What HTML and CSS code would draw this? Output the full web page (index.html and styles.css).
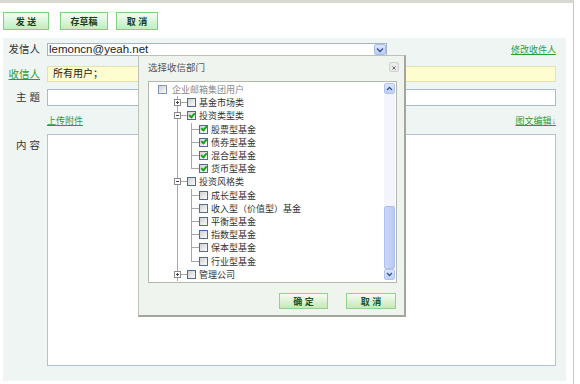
FILE: index.html
```html
<!DOCTYPE html>
<html lang="zh-CN">
<head>
    <meta charset="UTF-8">
    <meta name="viewport" content="width=device-width, initial-scale=1.0">
    <title>写信</title>
    <link rel="stylesheet" href="styles.css">
</head>
<body>
<div class="frame">
    <div class="toolbar">
        <button class="btn btn-send">发 送</button>
        <button class="btn btn-draft">存草稿</button>
        <button class="btn btn-cancel">取 消</button>
    </div>

    <div class="compose">
        <div class="row row-from">
            <span class="label">发信人</span>
            <div class="field">
                <div class="select">
                    <span class="select-text">lemoncn@yeah.net</span>
                    <span class="select-arrow">
                        <svg width="8" height="6" viewBox="0 0 8 6"><path d="M1 1.5 L4 4.5 L7 1.5" fill="none" stroke="#34558f" stroke-width="1.4"/></svg>
                    </span>
                </div>
                <a class="link link-right" href="#">修改收件人</a>
            </div>
        </div>
        <div class="row row-to">
            <a class="label label-link" href="#">收信人</a>
            <div class="field">
                <div class="input input-yellow">所有用户；</div>
            </div>
        </div>
        <div class="row row-subject">
            <span class="label">主 题</span>
            <div class="field">
                <div class="input"></div>
            </div>
        </div>
        <div class="row row-links">
            <span class="label"></span>
            <div class="field">
                <a class="link" href="#">上传附件</a>
                <a class="link link-right" href="#">图文编辑↓</a>
            </div>
        </div>
        <div class="row row-content">
            <span class="label">内 容</span>
            <div class="field">
                <div class="textarea"></div>
            </div>
        </div>
    </div>

    <!-- dept picker popup -->
    <div class="dialog">
        <div class="dialog-title">
            <span>选择收信部门</span>
            <span class="dialog-close">
                <svg width="10" height="10" viewBox="0 0 10 10"><path d="M3 3 L7 7 M7 3 L3 7" stroke="#666" stroke-width="1.2"/></svg>
            </span>
        </div>
        <div class="tree-box">
            <div class="tree">
                <div class="node lv0">
                    <span class="cb cb-dim"></span><span class="text text-dim">企业邮箱集团用户</span>
                </div>
                <div class="node lv1">
                    <span class="trunk"><svg width="7" height="7" viewBox="0 0 7 7"><rect x=".5" y=".5" width="6" height="6" fill="#fff" stroke="#8a8a8a"/><path d="M2 3.5 H5 M3.5 2 V5" stroke="#444"/></svg></span>
                    <span class="hline"></span><span class="cb"></span><span class="text">基金市场类</span>
                </div>
                <div class="node lv1">
                    <span class="trunk"><svg width="7" height="7" viewBox="0 0 7 7"><rect x=".5" y=".5" width="6" height="6" fill="#fff" stroke="#8a8a8a"/><path d="M2 3.5 H5" stroke="#444"/></svg></span>
                    <span class="hline"></span><span class="cb cb-on"></span><span class="text">投资类型类</span>
                </div>
                <div class="node lv2"><span class="trunk"></span><span class="elbow"></span><span class="cb cb-on"></span><span class="text">股票型基金</span></div>
                <div class="node lv2"><span class="trunk"></span><span class="elbow"></span><span class="cb cb-on"></span><span class="text">债券型基金</span></div>
                <div class="node lv2"><span class="trunk"></span><span class="elbow"></span><span class="cb cb-on"></span><span class="text">混合型基金</span></div>
                <div class="node lv2"><span class="trunk"></span><span class="elbow last"></span><span class="cb cb-on"></span><span class="text">货币型基金</span></div>
                <div class="node lv1">
                    <span class="trunk"><svg width="7" height="7" viewBox="0 0 7 7"><rect x=".5" y=".5" width="6" height="6" fill="#fff" stroke="#8a8a8a"/><path d="M2 3.5 H5" stroke="#444"/></svg></span>
                    <span class="hline"></span><span class="cb"></span><span class="text">投资风格类</span>
                </div>
                <div class="node lv2"><span class="trunk"></span><span class="elbow"></span><span class="cb"></span><span class="text">成长型基金</span></div>
                <div class="node lv2"><span class="trunk"></span><span class="elbow"></span><span class="cb"></span><span class="text">收入型（价值型）基金</span></div>
                <div class="node lv2"><span class="trunk"></span><span class="elbow"></span><span class="cb"></span><span class="text">平衡型基金</span></div>
                <div class="node lv2"><span class="trunk"></span><span class="elbow"></span><span class="cb"></span><span class="text">指数型基金</span></div>
                <div class="node lv2"><span class="trunk"></span><span class="elbow"></span><span class="cb"></span><span class="text">保本型基金</span></div>
                <div class="node lv2"><span class="trunk"></span><span class="elbow last"></span><span class="cb"></span><span class="text">行业型基金</span></div>
                <div class="node lv1">
                    <span class="trunk"><svg width="7" height="7" viewBox="0 0 7 7"><rect x=".5" y=".5" width="6" height="6" fill="#fff" stroke="#8a8a8a"/><path d="M2 3.5 H5 M3.5 2 V5" stroke="#444"/></svg></span>
                    <span class="hline"></span><span class="cb"></span><span class="text">管理公司</span>
                </div>
            </div>
            <div class="scrollbar">
                <span class="scroll-btn">
                    <svg width="7" height="5" viewBox="0 0 7 5"><path d="M1 4 L3.5 1.5 L6 4" fill="none" stroke="#34558f" stroke-width="1.3"/></svg>
                </span>
                <div class="scroll-track"><div class="scroll-thumb"></div></div>
                <span class="scroll-btn">
                    <svg width="7" height="5" viewBox="0 0 7 5"><path d="M1 1 L3.5 3.5 L6 1" fill="none" stroke="#34558f" stroke-width="1.3"/></svg>
                </span>
            </div>
        </div>
        <div class="dialog-buttons">
            <button class="btn btn-ok">确 定</button>
            <button class="btn btn-no">取 消</button>
        </div>
    </div>
</div>
</body>
</html>
```

FILE: styles.css
```css
body {
    margin: 0;
    background: #fff;
    font-family: "Liberation Sans", "Noto Sans CJK SC", sans-serif;
    color: #333;
}
.frame {
    position: relative;
    width: 574px;
    height: 384px;
    box-sizing: border-box;
    border-top: 3px solid #d8d8d0;
    border-right: 1px solid #c8c8c0;
}

/* toolbar */
.toolbar {
    display: flex;
    height: 35px;
    box-sizing: border-box;
    padding: 9px 0 0 3px;
}
.btn {
    height: 18px;
    padding: 0;
    border: 1px solid #7fd07f;
    background: linear-gradient(#f3fff3, #c3ebc3);
    font-family: "Liberation Sans", "Noto Sans CJK SC", sans-serif;
    font-size: 9px;
    font-weight: bold;
    color: #1d3a1d;
}
.btn-send { width: 46px; }
.btn-draft { width: 48px; margin-left: 11px; }
.btn-cancel { width: 42px; margin-left: 8px; }

/* compose form */
.compose {
    margin-left: 3px;
    width: 563px;
    height: 343px;
    box-sizing: border-box;
    padding-top: 5px;
    background: #eff5f3;
    display: flex;
    flex-direction: column;
}
.row {
    display: flex;
}
.label {
    flex: none;
    width: 44px;
    padding-right: 7px;
    box-sizing: border-box;
    text-align: right;
    font-size: 10.5px;
    color: #333;
}
.label-link {
    color: #2f9a3a;
}
.field {
    width: 509px;
    display: flex;
    align-items: center;
}
.link {
    font-size: 9px;
    color: #2f9a3a;
}
.link-right {
    margin-left: auto;
}

.row-from { height: 13px; }
.row-from .label { line-height: 13px; }
.select {
    width: 340px;
    height: 13px;
    box-sizing: border-box;
    border: 1px solid #a5b5c8;
    background: #fff;
    display: flex;
    align-items: center;
}
.select-text {
    flex: 1;
    padding-left: 1px;
    font-size: 11.5px;
    line-height: 11px;
    color: #222;
}
.select-arrow {
    width: 12px;
    height: 11px;
    box-sizing: border-box;
    border: 1px solid #a9bce8;
    border-radius: 2px;
    background: linear-gradient(#dbe5fb, #bccdf4);
    display: flex;
    align-items: center;
    justify-content: center;
}

.row-to { height: 16px; margin-top: 10px; }
.row-to .label { line-height: 16px; }
.input {
    width: 509px;
    height: 100%;
    box-sizing: border-box;
    border: 1px solid #a9bccf;
    background: #fff;
}
.input-yellow {
    border-color: #e4e2b2;
    background: #fdfdd0;
    padding-left: 5px;
    font-size: 10px;
    line-height: 14px;
    color: #222;
}

.row-subject { height: 17px; margin-top: 7px; }
.row-subject .label { line-height: 17px; }

.row-links { height: 12px; margin-top: 8px; }

.row-content { height: 232px; margin-top: 8px; }
.row-content .label { padding-top: 5px; line-height: 13px; }
.row-content .field { align-items: stretch; }
.textarea {
    width: 509px;
    box-sizing: border-box;
    border: 1px solid #b0c2d6;
    background: #fff;
}

/* popup */
.dialog {
    position: absolute;
    left: 138px;
    top: 52px;
    width: 268px;
    height: 262px;
    box-sizing: border-box;
    border: 1px solid #bcc2b8;
    border-right: 2px solid #a4a69e;
    border-bottom: 2px solid #a4a69e;
    background: #f0f4ee;
}
.dialog-title {
    height: 22px;
    display: flex;
    align-items: center;
    justify-content: space-between;
    padding: 0 5px 0 9px;
    font-size: 9.5px;
    color: #555;
}
.dialog-close {
    width: 10px;
    height: 10px;
    box-sizing: border-box;
    border: 1px solid #d0d0d0;
    border-radius: 2px;
    background: #ebebeb;
    display: flex;
}
.tree-box {
    margin: 3px 0 0 9px;
    width: 249px;
    height: 202px;
    box-sizing: border-box;
    border: 1px solid #b2b8ae;
    background: #fff;
    display: flex;
}
.tree {
    flex: 1;
    padding-top: 1px;
    overflow: hidden;
}
.node {
    height: 13.2px;
    display: flex;
    align-items: center;
    font-size: 9px;
    white-space: nowrap;
}
.lv0 { padding-left: 9px; }
.lv1, .lv2 { padding-left: 25px; }
.text {
    margin-left: 3px;
    color: #333;
}
.text-dim {
    margin-left: 5px;
    color: #8a8a8a;
}
.trunk {
    flex: none;
    width: 7px;
    height: 100%;
    display: flex;
    align-items: center;
    background: linear-gradient(#a8a8a8, #a8a8a8) 3px 0 / 1px 100% no-repeat;
}
.hline {
    flex: none;
    width: 6px;
    height: 100%;
    background: linear-gradient(#a8a8a8, #a8a8a8) 0 50% / 100% 1px no-repeat;
}
.elbow {
    flex: none;
    width: 18px;
    height: 100%;
    background:
        linear-gradient(#a8a8a8, #a8a8a8) 10px 0 / 1px 100% no-repeat,
        linear-gradient(#a8a8a8, #a8a8a8) 10px 50% / 8px 1px no-repeat;
}
.elbow.last {
    background:
        linear-gradient(#a8a8a8, #a8a8a8) 10px 0 / 1px 50% no-repeat,
        linear-gradient(#a8a8a8, #a8a8a8) 10px 50% / 8px 1px no-repeat;
}
.cb {
    flex: none;
    width: 9px;
    height: 9px;
    box-sizing: border-box;
    border: 1px solid #4d6c98;
    background: linear-gradient(135deg, #d0d0d0, #fbfbfb);
    position: relative;
}
.cb-dim {
    border-color: #8296b6;
}
.cb-on::after {
    content: "";
    position: absolute;
    left: 2px;
    top: -0.5px;
    width: 2px;
    height: 4px;
    border: solid #17a317;
    border-width: 0 2px 2px 0;
    transform: rotate(40deg);
}

.scrollbar {
    flex: none;
    width: 11px;
    margin-right: 1px;
    padding: 1px 0 2px;
    display: flex;
    flex-direction: column;
}
.scroll-btn {
    height: 11px;
    box-sizing: border-box;
    border: 1px solid #b3c3ee;
    border-radius: 2px;
    background: linear-gradient(#dce6fb, #c0d0f6);
    display: flex;
    align-items: center;
    justify-content: center;
}
.scroll-track {
    flex: 1;
    background: #f3f5fb;
    display: flex;
    flex-direction: column;
    justify-content: flex-end;
}
.scroll-thumb {
    height: 63px;
    box-sizing: border-box;
    border: 1px solid #afbff0;
    border-radius: 2px;
    background: linear-gradient(90deg, #cad7f8, #b9caf5);
}

.dialog-buttons {
    display: flex;
    justify-content: flex-end;
    gap: 18px;
    margin-top: 10px;
    padding-right: 8px;
}
.btn-ok, .btn-no {
    height: 16px;
    border-color: #92d28e;
    background: linear-gradient(#f6fcf2, #c5e8b6);
    color: #245224;
}
.btn-ok { width: 49px; }
.btn-no { width: 50px; }
```
